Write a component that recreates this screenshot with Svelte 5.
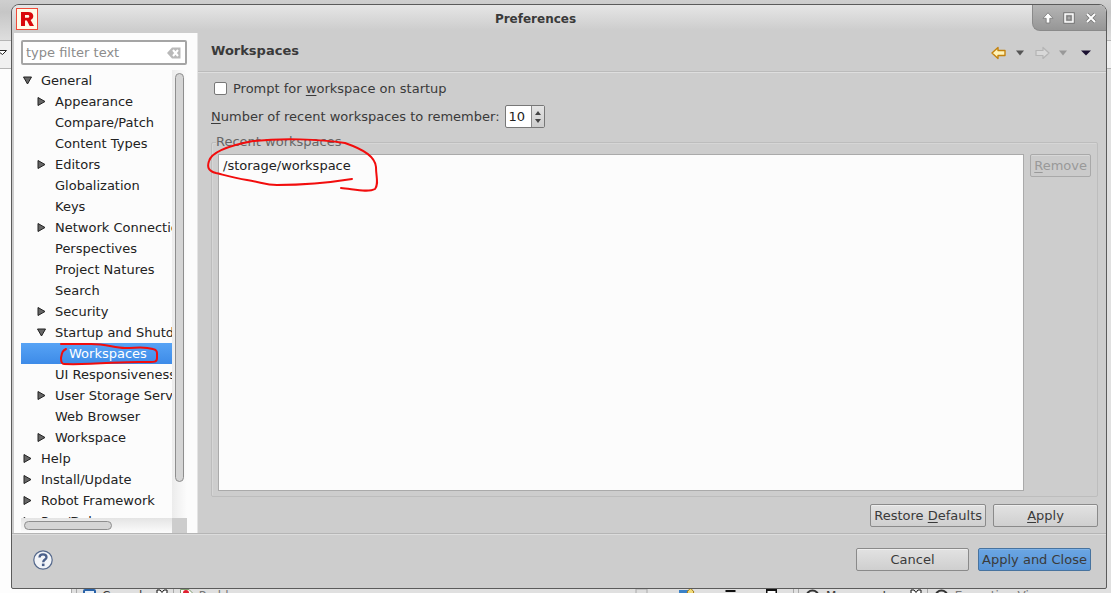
<script>
  const tree = [
    { label: 'General', level: 0, state: 'open' },
    { label: 'Appearance', level: 1, state: 'closed' },
    { label: 'Compare/Patch', level: 1 },
    { label: 'Content Types', level: 1 },
    { label: 'Editors', level: 1, state: 'closed' },
    { label: 'Globalization', level: 1 },
    { label: 'Keys', level: 1 },
    { label: 'Network Connections', level: 1, state: 'closed' },
    { label: 'Perspectives', level: 1 },
    { label: 'Project Natures', level: 1 },
    { label: 'Search', level: 1 },
    { label: 'Security', level: 1, state: 'closed' },
    { label: 'Startup and Shutdown', level: 1, state: 'open' },
    { label: 'Workspaces', level: 2, selected: true },
    { label: 'UI Responsiveness', level: 1 },
    { label: 'User Storage Service', level: 1, state: 'closed' },
    { label: 'Web Browser', level: 1 },
    { label: 'Workspace', level: 1, state: 'closed' },
    { label: 'Help', level: 0, state: 'closed' },
    { label: 'Install/Update', level: 0, state: 'closed' },
    { label: 'Robot Framework', level: 0, state: 'closed' },
    { label: 'Run/Debug', level: 0, state: 'closed' }
  ];
  let filter = $state('');
  let prompt = $state(false);
  let count = $state(10);
</script>

{#snippet closeMark()}
  <svg class="close" width="12" height="12" viewBox="0 0 12 12"><path d="M1 1H4L6 3.500L8 1H11V4L8.500 6L11 8V11H8L6 8.500L4 11H1V8L3.500 6L1 4Z" fill="#fff" stroke="#111" /></svg>
{/snippet}

{#snippet robot()}
  <svg width="15" height="14" viewBox="0 0 15 14"><circle cx="7.500" cy="7.500" r="6" fill="#eee" stroke="#333" stroke-width="2" /><path d="M4 5H11" stroke="#222" stroke-width="2" /></svg>
{/snippet}

<div class="desktop">
  <div class="ide">
    <div class="ide-top"></div>
    <div class="ide-tools">
      <svg width="8" height="8" viewBox="0 0 8 8"><path d="M-3 1.500H6.500L2.500 5.500Z" fill="#fff" stroke="#222" /></svg>
    </div>
    <div class="ide-body"></div>
    <div class="ide-tabs">
      <div class="tabs first">
        <span class="tab"><svg width="13" height="12" viewBox="0 0 13 12"><rect x="1" y="1" width="11" height="9" rx="1" fill="#e8f1fb" stroke="#2a63a8" stroke-width="2" /></svg>Console {@render closeMark()}</span>
        <span class="tab dim"><svg width="13" height="12" viewBox="0 0 13 12"><path d="M.5 .5H9L12.500 4V11.500H.5Z" fill="#fff" stroke="#7d9a6c" /><circle cx="6" cy="4" r="3" fill="#e02030" /></svg>Problems</span>
        <span class="tools">
          <svg width="14" height="12" viewBox="0 0 14 12"><rect x="1" y="1" width="11" height="10" fill="#ddd" stroke="#aaa" /></svg>
          <svg width="16" height="12" viewBox="0 0 16 12"><path d="M0 2H10V11H0Z" fill="#3b82c8" /><path d="M11.500 0L15 4L11.500 8L8 4Z" fill="#f2dc7a" stroke="#a67c16" /></svg>
          <svg width="11" height="12" viewBox="0 0 11 12"><rect x=".5" y="2" width="10" height="2" fill="#111" /></svg>
          <svg width="11" height="12" viewBox="0 0 11 12"><rect x=".5" y="2" width="10" height="8" fill="#fff" stroke="#111" stroke-width="2" /></svg>
        </span>
      </div>
      <div class="tabs second">
        <span class="tab">{@render robot()}Message Log {@render closeMark()}</span>
        <span class="tab dim">{@render robot()}Execution View</span>
      </div>
    </div>
  </div>

  <section class="dialog" aria-label="Preferences">
    <header class="titlebar">
      <svg class="logo" width="22" height="22" viewBox="0 0 22 22" aria-hidden="true">
        <rect x=".5" y=".5" width="21" height="21" fill="#fffbe8" stroke="#f04a38" />
        <path fill="#d90a0a" fill-rule="evenodd" d="M5 4H12C15.500 4 17.300 5.600 17.300 8.100C17.300 10 16.300 11.300 14.600 11.900L18 18H13.700L10.900 12.500H9V18H5ZM9 7V9.800H11.400C12.700 9.800 13.300 9.300 13.300 8.400C13.300 7.400 12.700 7 11.400 7Z" />
      </svg>
      <h1>Preferences</h1>
      <div class="controls">
        <button aria-label="Shade"><svg width="12" height="12" viewBox="0 0 12 12"><path d="M6 .8L11 6.300H7.800V11H4.200V6.300H1Z" fill="#fff" stroke="#777" stroke-width=".8" /></svg></button>
        <button aria-label="Maximize"><svg width="12" height="12" viewBox="0 0 12 12"><rect x="2" y="2" width="8" height="8" fill="none" stroke="#777" stroke-width="3.500" /><rect x="2" y="2" width="8" height="8" fill="#aaa" stroke="#fff" stroke-width="1.500" /><rect x="4" y="4" width="4" height="4" fill="none" stroke="#777" /></svg></button>
        <button aria-label="Close"><svg width="12" height="12" viewBox="0 0 12 12"><path d="M2 2L10 10M10 2L2 10" stroke="#777" stroke-width="3.600" /><path d="M2 2L10 10M10 2L2 10" stroke="#fff" stroke-width="2" /></svg></button>
      </div>
    </header>

    <div class="content">
      <aside>
        <div class="filter">
          <input type="text" aria-label="Filter" placeholder="type filter text" bind:value={filter} />
          <button aria-label="Clear filter" onclick={() => (filter = '')}>
            <svg width="14" height="12" viewBox="0 0 14 12"><path d="M5 .5H13.500V11.500H5L0 6Z" fill="#b9b9b9" /><path d="M6 3L11 9M11 3L6 9" stroke="#fff" stroke-width="2" /></svg>
          </button>
        </div>
        <div class="treebox">
          <ul class="tree" role="tree">
            {#each tree as item}
              <li role="treeitem" aria-selected={!!item.selected} class="level{item.level}" class:selected={item.selected}>
                <span class="twist">
                  {#if item.state === 'open'}
                    <svg width="10" height="10" viewBox="0 0 10 10"><path d="M.5 1H8.500L4.500 8Z" fill="#666" stroke="#222" /></svg>
                  {:else if item.state === 'closed'}
                    <svg width="10" height="10" viewBox="0 0 10 10"><path d="M1 .5L8 4.500L1 8.500Z" fill="#666" stroke="#222" /></svg>
                  {/if}
                </span>
                <span>{item.label}</span>
                {#if item.selected}
                  <svg class="mark" width="102" height="24" viewBox="0 0 102 24" aria-hidden="true"><path d="M2 1H32C48 1 55 5 66 5C78 5 84 3 94 6C99 7 98 10 98 15C98 20 94 19 86 19C65 18 38 22 5 21C2 21 2 18 2 15C3 10 3 8 7 6" /></svg>
                {/if}
              </li>
            {/each}
          </ul>
          <div class="vscroll"><i></i></div>
          <div class="hscroll"><i></i></div>
          <div class="corner"></div>
        </div>
      </aside>

      <main>
        <div class="pagehead">
          <h2>Workspaces</h2>
          <nav>
            <button aria-label="Back"><svg width="16" height="14" viewBox="0 0 16 14"><path d="M1 7L7 1.500V4.500H14V9.500H7V12.500Z" fill="#fff3b8" stroke="#c4820e" stroke-width="1.400" stroke-linejoin="round" /></svg></button>
            <button aria-label="Back history"><svg width="10" height="6" viewBox="0 0 10 6"><path d="M1 .5H9L5 5.500Z" fill="#555" /></svg></button>
            <button aria-label="Forward" disabled><svg width="16" height="14" viewBox="0 0 16 14"><path d="M15 7L9 1.500V4.500H2V9.500H9V12.500Z" fill="#d8d8d8" stroke="#b4b4b4" stroke-width="1.200" stroke-linejoin="round" /></svg></button>
            <button aria-label="Forward history" disabled><svg width="10" height="6" viewBox="0 0 10 6"><path d="M1 .5H9L5 5.500Z" fill="#999" /></svg></button>
            <button aria-label="Menu"><svg width="10" height="6" viewBox="0 0 10 6"><path d="M0 .5H10L5 5.500Z" fill="#1a1030" /></svg></button>
          </nav>
        </div>
        <div class="page">
          <label class="check"><input type="checkbox" bind:checked={prompt} /><span>Prompt for <u>w</u>orkspace on startup</span></label>
          <div class="number">
            <label for="count"><u>N</u>umber of recent workspaces to remember:</label>
            <div class="spinner">
              <input id="count" type="text" inputmode="numeric" bind:value={count} />
              <div class="steps">
                <button aria-label="Increase" onclick={() => count++}><svg width="6" height="4" viewBox="0 0 6 4"><path d="M0 4L3 0L6 4Z" fill="#444" /></svg></button>
                <button aria-label="Decrease" onclick={() => count--}><svg width="6" height="4" viewBox="0 0 6 4"><path d="M0 0L3 4L6 0Z" fill="#444" /></svg></button>
              </div>
            </div>
          </div>
          <div class="group" role="group" aria-labelledby="recent">
            <div class="legend"><span id="recent">Recent workspaces</span></div>
            <div class="frame">
              <ul class="list"><li>/storage/workspace</li></ul>
              <button class="btn" disabled><u>R</u>emove</button>
            </div>
            <svg class="circle" width="176" height="62" viewBox="0 0 176 62" aria-hidden="true"><path d="M145 40C120 44 90 46 70 46C58 46 54 43 40 41C26 39 14 35 9 34C1 32 0 28 2 22C5 12 25 6 46 2C75 -1 112 0 138 4C158 11 168 18 169 28C169 38 172 45 168 50C161 54 146 50 134 49" /></svg>
          </div>
          <div class="actions">
            <button class="btn">Restore <u>D</u>efaults</button>
            <button class="btn apply"><u>A</u>pply</button>
          </div>
        </div>
      </main>
    </div>

    <footer>
      <button class="help" aria-label="Help">
        <svg width="20" height="20" viewBox="0 0 20 20"><circle cx="10" cy="10" r="9.200" fill="#f2f4f8" stroke="#54688c" stroke-width="1.200" /><path d="M6.500 7.500C6.600 5.200 8.200 4.400 10 4.400C12.200 4.400 13.500 5.500 13.500 7.200C13.500 9.600 10.200 9.500 10.200 12.300" fill="none" stroke="#4a5f8a" stroke-width="2.300" /><rect x="8.900" y="13.600" width="2.600" height="2.500" fill="#4a5f8a" /></svg>
      </button>
      <div class="final">
        <button class="btn">Cancel</button>
        <button class="btn primary">Apply and Close</button>
      </div>
    </footer>
  </section>
</div>

<style>
  :global(body) { margin: 0; }
  * { box-sizing: border-box; }
  button { font: inherit; color: inherit; padding: 0; border: 0; background: none; }
  ul { list-style: none; margin: 0; padding: 0; }
  svg { display: block; flex: none; }
  u { text-underline-offset: 2px; }

  .desktop {
    position: relative;
    height: 100vh;
    overflow: hidden;
    font: 13px/21px "DejaVu Sans", sans-serif;
    color: #3a3a3a;
  }
  .ide { height: 100%; display: flex; flex-direction: column; background: #fdfdfd; }
  .ide-top { height: 40px; flex: none; background: linear-gradient(#cfcfcf, #c6c6c6 30%, #dedede); }
  .ide-tools { height: 29px; flex: none; padding-top: 8px; background: #f0f0f0; border: solid #b5b5b5; border-width: 1px 0; }
  .ide-body { flex: 1; border-right: 8px solid #e0e0e0; }
  .ide-tabs { height: 5px; flex: none; display: flex; padding-left: 71px; font-size: 12px; line-height: 16px; }
  .tabs { display: flex; height: 20px; background: #e0e0e0; border-left: 1px solid #aaa; padding-left: 4px; }
  .tabs.first { width: 722px; }
  .tabs.second { flex: 1; min-width: 0; }
  .tab { display: flex; gap: 6px; height: 20px; padding: 0 5px 0 6px; border-left: 1px solid #aaa; white-space: nowrap; }
  .tab svg { margin-top: 1px; }
  .tools { display: flex; gap: 30px; margin-left: auto; padding-right: 16px; }
  .dim { color: #777; }

  .dialog {
    position: absolute;
    inset: 4px 4px 4px 11px;
    display: flex;
    flex-direction: column;
    background: #cdcdcd;
    border: 1px solid #5b5b5b;
    border-radius: 8px 8px 2px 2px;
    overflow: hidden;
  }
  .titlebar {
    display: grid;
    grid-template-columns: 74px 1fr 74px;
    height: 28px;
    flex: none;
    background: linear-gradient(#e6e6e6, #cdcdcd 90%);
  }
  .logo { margin: 3px 4px; }
  h1, h2 { margin: 0; font-size: 13px; font-weight: bold; }
  h1 { text-align: center; line-height: 28px; padding-right: 47px; font-size: 12px; }
  .controls {
    display: flex;
    align-items: center;
    justify-content: space-around;
    height: 26px;
    padding: 0 4px;
    background: linear-gradient(#b5b5b5, #969696);
    border: solid #8a8a8a;
    border-width: 0 0 1px 1px;
    border-radius: 0 0 0 8px;
  }
  .content { flex: 1; min-height: 0; display: flex; padding-left: 2px; }
  aside {
    width: 184px;
    flex: none;
    display: flex;
    flex-direction: column;
    gap: 5px;
    padding: 7px 10px 0 7px;
    background: #fcfcfc;
    border-right: 1px solid #e4e4e4;
  }
  .filter { display: flex; align-items: center; height: 25px; flex: none; padding: 0 4px 0 3px; border: 2px solid #a5a5a5; border-radius: 2px; background: #fff; }
  .filter input { flex: 1; min-width: 0; padding: 0; border: 0; outline: 0; background: none; font: inherit; color: #333; }
  .filter input::placeholder { color: #8c8c8c; opacity: 1; }
  .treebox { flex: 1; min-height: 0; display: grid; grid-template: minmax(0, 1fr) 15px / minmax(0, 1fr) 15px; }
  .tree { overflow: hidden; }
  .tree li { position: relative; display: flex; align-items: center; height: 21px; white-space: nowrap; color: #222; }
  .twist { width: 20px; flex: none; padding-left: 2px; }
  .level1 { padding-left: 14px; }
  .level2 { padding-left: 28px; }
  .tree .selected { color: #fff; background: linear-gradient(#57a3f5, #3d8be8); }
  .mark { position: absolute; left: 38px; top: 0; overflow: visible; z-index: 1; }
  .mark path, .circle path { fill: none; stroke: #f20d0d; stroke-width: 2; stroke-linecap: round; stroke-linejoin: round; }
  .vscroll { padding: 3px 3px 36px; background: linear-gradient(90deg, #ececec, #fcfcfc); }
  .hscroll { padding: 3px 60px 3px 3px; background: linear-gradient(#e4e4e4, #fcfcfc); }
  .vscroll i, .hscroll i { display: block; height: 100%; background: #d5d5d5; border: 1px solid #8e8e8e; border-radius: 5px; }
  .corner { background: #cdcdcd; }

  main { flex: 1; min-width: 0; display: flex; flex-direction: column; }
  .pagehead {
    display: flex;
    justify-content: space-between;
    height: 39px;
    flex: none;
    padding: 7px 15px 0 13px;
    border-bottom: 1px solid #bbb;
    box-shadow: 0 1px #dedede;
  }
  nav { display: flex; align-items: center; gap: 8px; height: 26px; }
  nav button:nth-child(3) { margin-left: 1px; }
  nav button:last-child { margin-left: 5px; }
  .page { flex: 1; min-height: 0; display: flex; flex-direction: column; padding: 6px 8px 6px 13px; }
  .check { display: flex; align-items: center; gap: 6px; height: 20px; padding-left: 3px; }
  .check input { appearance: none; width: 13px; height: 13px; margin: 0; background: #fff; border: 1px solid #777; border-radius: 2px; }
  .number { display: flex; align-items: center; gap: 5px; height: 23px; margin-top: 7px; }
  .spinner { display: flex; width: 40px; height: 23px; border: 1px solid #777; border-radius: 2px; background: #fff; }
  .spinner input { width: 25px; padding: 0 0 0 3px; border: 0; outline: 0; background: none; font: inherit; color: #222; }
  .steps { flex: 1; display: flex; flex-direction: column; gap: 1px; padding: 3px 0; background: linear-gradient(#e4e4e4, #cdcdcd); border-left: 1px solid #888; }
  .steps button { flex: 1; display: flex; align-items: center; justify-content: center; }
  .group { position: relative; flex: 1; min-height: 0; display: flex; flex-direction: column; margin-top: 3px; }
  .legend { position: relative; height: 11px; line-height: 21px; padding-left: 5px; color: #666; }
  .legend span { background: #cdcdcd; }
  .frame {
    flex: 1;
    min-height: 0;
    display: flex;
    align-items: flex-start;
    gap: 6px;
    padding: 11px 6px 5px;
    border: 1px solid #bdbdbd;
    border-radius: 2px;
    box-shadow: inset 1px 1px #d6d6d6;
  }
  .list { flex: 1; align-self: stretch; padding: 0 4px; background: #fcfcfc; border: 1px solid #aaa; color: #222; }
  .circle { position: absolute; left: -4px; top: 8px; overflow: visible; }
  .btn {
    height: 23px;
    padding: 0 3px;
    line-height: 20px;
    white-space: nowrap;
    color: #3a3a3a;
    background: linear-gradient(#e2e2e2, #cfcfcf);
    border: 1px solid #8a8a8a;
    border-radius: 2px;
    box-shadow: inset 0 1px #eee;
  }
  .btn:disabled { color: #999; background: #cbcbcb; border-color: #a9a9a9; box-shadow: inset 0 1px #d8d8d8; }
  .actions { display: flex; justify-content: flex-end; gap: 7px; padding-top: 7px; }
  .apply { width: 105px; }
  footer {
    display: flex;
    align-items: center;
    justify-content: space-between;
    height: 55px;
    flex: none;
    padding: 0 15px 3px 21px;
    border-top: 1px solid #b5b5b5;
    box-shadow: inset 0 1px #dcdcdc;
  }
  .final { display: flex; gap: 9px; }
  .final .btn { width: 113px; }
  .btn.primary { background: linear-gradient(#6ba6e3, #5794d8); border-color: #47739f; box-shadow: inset 0 1px #7db2e8; }
</style>
